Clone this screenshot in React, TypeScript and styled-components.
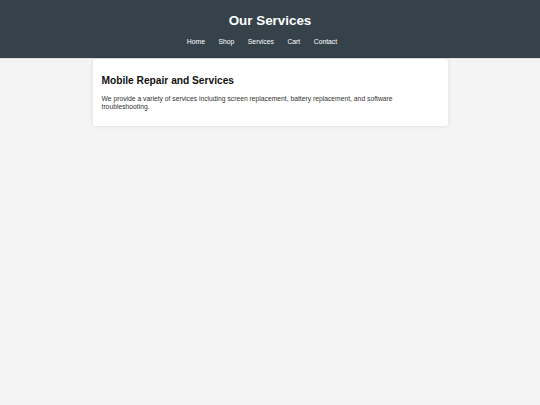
import React from "react";
import styled, { createGlobalStyle } from "styled-components";

const Global = createGlobalStyle`
  html, body { margin: 0; padding: 0; }
  body {
    background: #f4f4f4;
    font-family: "Liberation Sans", Arial, sans-serif;
    min-height: 405px;
  }
`;

const Header = styled.header`
  background: #35424a;
  color: #ffffff;
  height: 59px;
  box-sizing: border-box;
  padding-top: 13px;
  text-align: center;
  border-bottom: 1px solid #e0e0e0;
`;

const Title = styled.h1`
  margin: 0;
  font-size: 13.4px;
  font-weight: bold;
  line-height: 16px;
`;

const Nav = styled.nav`
  display: flex;
  justify-content: center;
  gap: 13.5px;
  margin-top: 9px;
  padding-right: 16px;
`;

const NavLink = styled.a`
  color: #ffffff;
  text-decoration: none;
  font-size: 6.8px;
  line-height: 8px;
`;

const Main = styled.main`
  width: 355px;
  margin: 0 auto;
`;

const Card = styled.section`
  background: #ffffff;
  padding: 16px 9px 15px;
  box-shadow: 0 0 4px rgba(0, 0, 0, 0.1);
  border-radius: 3px;
`;

const CardTitle = styled.h2`
  margin: 0 0 8px;
  font-size: 10.2px;
  font-weight: bold;
  color: #111;
  line-height: 12px;
`;

const Text = styled.p`
  margin: 0;
  font-size: 6.75px;
  line-height: 8px;
  color: #333;
`;

const links = ["Home", "Shop", "Services", "Cart", "Contact"];

export default function App() {
  return (
    <>
      <Global />
      <Header>
        <Title>Our Services</Title>
        <Nav>
          {links.map((l) => (
            <NavLink key={l} href="#">{l}</NavLink>
          ))}
        </Nav>
      </Header>
      <Main>
        <Card>
          <CardTitle>Mobile Repair and Services</CardTitle>
          <Text>
            We provide a variety of services including screen replacement, battery replacement, and software troubleshooting.
          </Text>
        </Card>
      </Main>
    </>
  );
}
